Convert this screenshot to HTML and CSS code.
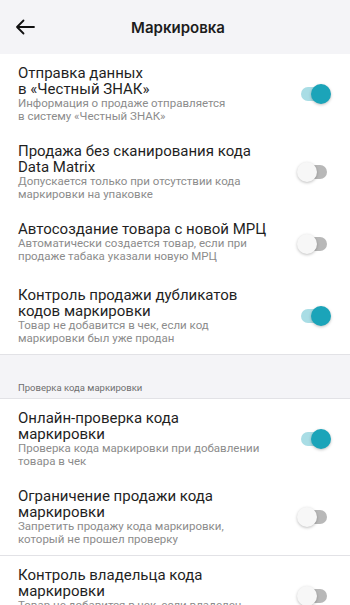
FILE: index.html
```html
<!DOCTYPE html>
<html lang="ru">
<head>
<meta charset="utf-8">
<link rel="stylesheet" href="styles.css">
</head>
<body>
<header class="topbar">
  <svg class="back" width="20" height="16" viewBox="0 0 20 16"><path d="M19 8H2M8.5 1.5L2 8l6.5 6.5" fill="none" stroke="#111" stroke-width="1.8" stroke-linecap="round" stroke-linejoin="round"/></svg>
  <h1 class="title">Маркировка</h1>
</header>
<main>
  <div class="item">
    <div class="text">
      <div class="name">Отправка данных<br>в «Честный ЗНАК»</div>
      <div class="desc">Информация о продаже отправляется<br>в систему «Честный ЗНАК»</div>
    </div>
    <span class="toggle on"></span>
  </div>
  <div class="item">
    <div class="text">
      <div class="name">Продажа без сканирования кода<br>Data Matrix</div>
      <div class="desc">Допускается только при отсутствии кода<br>маркировки на упаковке</div>
    </div>
    <span class="toggle"></span>
  </div>
  <div class="item">
    <div class="text">
      <div class="name">Автосоздание товара с новой МРЦ</div>
      <div class="desc">Автоматически создается товар, если при<br>продаже табака указали новую МРЦ</div>
    </div>
    <span class="toggle"></span>
  </div>
  <div class="item">
    <div class="text">
      <div class="name">Контроль продажи дубликатов<br>кодов маркировки</div>
      <div class="desc">Товар не добавится в чек, если код<br>маркировки был уже продан</div>
    </div>
    <span class="toggle on"></span>
  </div>
  <div class="section">Проверка кода маркировки</div>
  <div class="item">
    <div class="text">
      <div class="name">Онлайн-проверка кода<br>маркировки</div>
      <div class="desc">Проверка кода маркировки при добавлении<br>товара в чек</div>
    </div>
    <span class="toggle on"></span>
  </div>
  <div class="item sep">
    <div class="text">
      <div class="name">Ограничение продажи кода<br>маркировки</div>
      <div class="desc">Запретить продажу кода маркировки,<br>который не прошел проверку</div>
    </div>
    <span class="toggle"></span>
  </div>
  <div class="item">
    <div class="text">
      <div class="name">Контроль владельца кода<br>маркировки</div>
      <div class="desc">Товар не добавится в чек, если владелец<br>кода маркировки не совпадает</div>
    </div>
    <span class="toggle"></span>
  </div>
</main>
</body>
</html>
```
FILE: styles.css
```css
* { box-sizing: border-box; }
html, body { margin: 0; padding: 0; }
body {
  width: 350px;
  height: 605px;
  overflow: hidden;
  background: #fff;
  font-family: Roboto, "Noto Sans", sans-serif;
  color: #1f1f1f;
}
.topbar {
  height: 54px;
  background: #f4f4f7;
  display: flex;
  align-items: center;
  position: relative;
  padding-left: 15px;
}
.back { display: block; }
.title {
  margin: 0;
  position: absolute;
  left: 0;
  right: 0;
  text-align: center;
  font-family: Inter, Roboto, sans-serif;
  font-size: 15px;
  font-weight: 600;
  color: #1c1c1c;
  pointer-events: none;
  padding-left: 6px;
}
.item {
  display: flex;
  align-items: center;
  justify-content: space-between;
  min-height: 66px;
  padding: 11px 20px 9px 18px;
}
.item.sep { border-bottom: 1px solid #e2e2e6; }
.text {
  display: flex;
  flex-direction: column;
  align-self: flex-start;
}
.name {
  font-size: 15px;
  line-height: 16px;
  color: #1f1f1f;
}
.desc {
  font-size: 11.5px;
  line-height: 13px;
  color: #8c8c8c;
}
.toggle {
  position: relative;
  flex: none;
  width: 26px;
  height: 14px;
  border-radius: 7px;
  background: #b8b8b8;
  margin-right: 3px;
}
.toggle::after {
  content: "";
  position: absolute;
  top: -3px;
  left: -4px;
  width: 20px;
  height: 20px;
  border-radius: 50%;
  background: #f7f7f7;
  box-shadow: 0 1px 3px rgba(0,0,0,0.25);
}
.toggle.on { background: #a9dde5; }
.toggle.on::after {
  left: 10px;
  background: #1ba4b9;
}
.section {
  height: 45px;
  background: #f4f4f7;
  border-top: 1px solid #e2e2e6;
  border-bottom: 1px solid #e2e2e6;
  display: flex;
  align-items: flex-end;
  padding: 0 0 5px 18px;
  font-size: 9.5px;
  line-height: 11px;
  color: #6e6e6e;
}
```
